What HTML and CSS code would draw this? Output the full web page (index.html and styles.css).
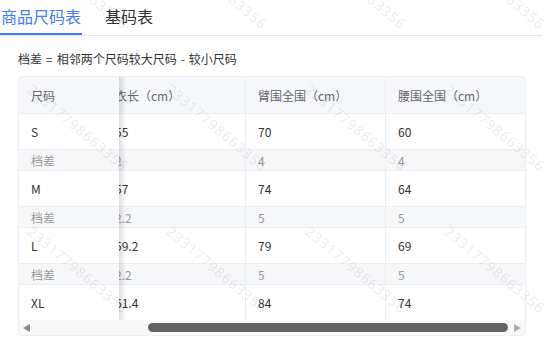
FILE: index.html
```html
<!DOCTYPE html>
<html lang="zh-CN">
<head>
<meta charset="utf-8">
<title>尺码表</title>
<link rel="stylesheet" href="styles.css">
</head>
<body>
<div class="page">
  <div class="tabs">
    <div class="tab active">商品尺码表</div>
    <div class="tab">基码表</div>
  </div>
  <p class="note">档差 = 相邻两个尺码较大尺码 - 较小尺码</p>
  <div class="table">
    <div class="row head">
      <div class="cell fixed">尺码</div>
      <div class="cell clip"><span>衣长（cm）</span></div>
      <div class="cell">臂围全围（cm）</div>
      <div class="cell last">腰围全围（cm）</div>
    </div>
    <div class="row main">
      <div class="cell fixed">S</div>
      <div class="cell clip"><span>55</span></div>
      <div class="cell">70</div>
      <div class="cell last">60</div>
    </div>
    <div class="row diff">
      <div class="cell fixed">档差</div>
      <div class="cell clip"><span>2</span></div>
      <div class="cell">4</div>
      <div class="cell last">4</div>
    </div>
    <div class="row main">
      <div class="cell fixed">M</div>
      <div class="cell clip"><span>57</span></div>
      <div class="cell">74</div>
      <div class="cell last">64</div>
    </div>
    <div class="row diff">
      <div class="cell fixed">档差</div>
      <div class="cell clip"><span>2.2</span></div>
      <div class="cell">5</div>
      <div class="cell last">5</div>
    </div>
    <div class="row main">
      <div class="cell fixed">L</div>
      <div class="cell clip"><span>59.2</span></div>
      <div class="cell">79</div>
      <div class="cell last">69</div>
    </div>
    <div class="row diff">
      <div class="cell fixed">档差</div>
      <div class="cell clip"><span>2.2</span></div>
      <div class="cell">5</div>
      <div class="cell last">5</div>
    </div>
    <div class="row main final">
      <div class="cell fixed">XL</div>
      <div class="cell clip"><span>61.4</span></div>
      <div class="cell">84</div>
      <div class="cell last">74</div>
    </div>
    <div class="scrollbar">
      <div class="sb-btn"><span class="arrow-left"></span></div>
      <div class="sb-track"><div class="sb-thumb"></div></div>
      <div class="sb-btn"><span class="arrow-right"></span></div>
    </div>
  </div>
</div>
<div class="watermarks">
  <span class="wm"><span>23317798663356</span></span>
  <span class="wm"><span>23317798663356</span></span>
  <span class="wm"><span>23317798663356</span></span>
  <span class="wm"><span>23317798663356</span></span>
  <span class="wm"><span>23317798663356</span></span>
  <span class="wm"><span>23317798663356</span></span>
  <span class="wm"><span>23317798663356</span></span>
  <span class="wm"><span>23317798663356</span></span>
  <span class="wm"><span>23317798663356</span></span>
  <span class="wm"><span>23317798663356</span></span>
  <span class="wm"><span>23317798663356</span></span>
  <span class="wm"><span>23317798663356</span></span>
  <span class="wm"><span>23317798663356</span></span>
  <span class="wm"><span>23317798663356</span></span>
  <span class="wm"><span>23317798663356</span></span>
  <span class="wm"><span>23317798663356</span></span>
</div>
</body>
</html>
```

FILE: styles.css
```css
* { box-sizing: border-box; }
html, body { margin: 0; padding: 0; background: #fff; }
body {
  font-family: "Noto Sans CJK SC", "Noto Sans", sans-serif;
  color: #333;
  overflow: hidden;
}
.page { width: 542px; }

.tabs {
  display: flex;
  gap: 22px;
  height: 36px;
  border-bottom: 1px solid #e4e7ed;
}
.tab {
  height: 35px;
  padding: 0 1px;
  font-size: 16px;
  line-height: 33px;
  color: #303133;
  border-bottom: 2px solid transparent;
}
.tab.active {
  color: #3f7cf5;
  border-bottom-color: #3f7cf5;
}

.note {
  margin: 13px 0 7px 18px;
  font-size: 12px;
  line-height: 20px;
  word-spacing: 1.3px;
  color: #333;
}

.table {
  position: relative;
  margin-left: 18px;
  width: 508px;
  border: 1px solid #ebeef5;
  border-radius: 4px;
  overflow: hidden;
  font-size: 12px;
}
.table::after {
  content: "";
  position: absolute;
  left: 100px;
  top: 0;
  bottom: 15px;
  width: 7px;
  background: linear-gradient(to right, rgba(0,0,0,0.13), rgba(0,0,0,0));
  pointer-events: none;
}
.row {
  display: grid;
  grid-template-columns: 100px 127px 140px 1fr;
  border-bottom: 1px solid #ebeef5;
}
.row.head { height: 37px; background: #f5f7fa; color: #666; }
.row.main { height: 36px; background: #fff; color: #333; }
.row.diff { height: 21px; background: #f6f7f9; color: #999; }
.row.final { height: 35px; border-bottom: none; }

.cell {
  display: flex;
  align-items: center;
  padding-left: 12px;
  border-right: 1px solid #ebeef5;
  white-space: nowrap;
  overflow: hidden;
}
.cell.fixed { border-right: none; }
.cell.last { border-right: none; }
.cell.clip { padding-left: 0; }
.cell.clip span { margin-left: -4px; }

.scrollbar {
  display: flex;
  height: 15px;
  background: #f9f9f9;
}
.sb-btn {
  width: 15px;
  display: flex;
  align-items: center;
  justify-content: center;
}
.arrow-left {
  width: 0; height: 0;
  border-top: 4.5px solid transparent;
  border-bottom: 4.5px solid transparent;
  border-right: 7px solid #8a8a8a;
}
.arrow-right {
  width: 0; height: 0;
  border-top: 4.5px solid transparent;
  border-bottom: 4.5px solid transparent;
  border-left: 7px solid #ababab;
}
.sb-track {
  flex: 1;
  display: flex;
  align-items: center;
  justify-content: flex-end;
}
.sb-thumb {
  width: 360px;
  height: 9px;
  margin-right: 2px;
  border-radius: 5px;
  background: #636363;
}

.watermarks {
  position: fixed;
  top: -86px;
  left: 9px;
  display: grid;
  grid-template-columns: repeat(4, 139px);
  grid-auto-rows: 142px;
  pointer-events: none;
}
.wm {
  display: flex;
  align-items: center;
  justify-content: center;
}
.wm span {
  display: block;
  transform: rotate(40deg);
  font-family: "Noto Sans", sans-serif;
  font-size: 14px;
  letter-spacing: 1px;
  color: rgba(0,0,0,0.08);
  white-space: nowrap;
}
```
